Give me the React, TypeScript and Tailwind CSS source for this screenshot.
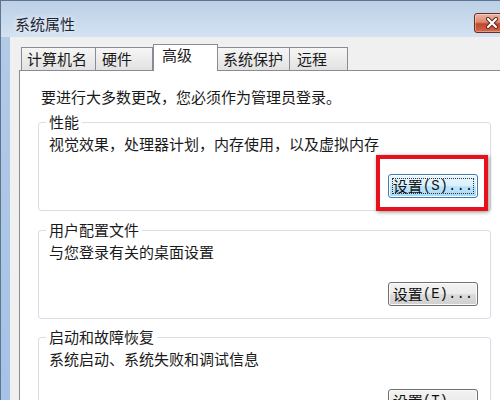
import React from 'react';

type Tab = { label: string; active?: boolean; cls: string };

const tabs: Tab[] = [
  { label: '计算机名', cls: 'ml-[2px] w-[75px] pl-[5px]' },
  { label: '硬件', cls: '-ml-px w-[58px] pl-[6px]' },
  { label: '高级', active: true, cls: 'w-[65px] pl-[8px]' },
  { label: '系统保护', cls: '-ml-px w-[73px] pl-[5px]' },
  { label: '远程', cls: '-ml-px w-[59px] pl-[7px]' },
];

const groups = [
  { title: '性能', text: '视觉效果，处理器计划，内存使用，以及虚拟内存', key: 'S', focused: true, mt: 'mt-[6px]' },
  { title: '用户配置文件', text: '与您登录有关的桌面设置', key: 'E', focused: false, mt: 'mt-[10px]' },
  { title: '启动和故障恢复', text: '系统启动、系统失败和调试信息', key: 'T', focused: false, mt: 'mt-[9px]' },
];

const SettingsButton: React.FC<{ hotkey: string; focused: boolean }> = ({ hotkey, focused }) => (
  <button
    className={
      focused
        ? 'relative flex h-[24px] w-[90px] items-center justify-center rounded-[3px] border border-[#3c7fb1] bg-[linear-gradient(#eaf6fd,#d9f0fc_50%,#bee6fd_50%,#a7d9f5)] text-[15px] leading-[18px] text-[#111] shadow-[inset_0_0_0_1px_#fff]'
        : 'relative flex h-[24px] w-[90px] items-center justify-center rounded-[3px] border border-[#707070] bg-[linear-gradient(#f2f2f2,#ebebeb_50%,#dddddd_50%,#cfcfcf)] text-[15px] leading-[18px] text-[#111] shadow-[inset_0_0_0_1px_#fbfbfb]'
    }
  >
    <span>设置</span>
    <span className="font-['Liberation_Mono',monospace] text-[14px]">({hotkey})...</span>
    {focused && <span className="absolute inset-[3px] border border-dotted border-[#333]" />}
  </button>
);

export default function App() {
  return (
    <div className="h-[400px] w-[500px] overflow-hidden bg-white font-['Noto_Sans_CJK_SC',sans-serif] text-[#1a1a1a]">
      <div className="flex h-[400px] w-[528px] flex-col border-l border-t border-[#5f7490] bg-[linear-gradient(#b4cbe7,#a6c2e5)]">
        {/* Title bar */}
        <div className="flex h-[36px] shrink-0 items-start justify-between bg-[linear-gradient(#bccfe6,#d4e2f2)] pl-[14px] pr-[18px]">
          <span className="mt-[14px] text-[15px] leading-[18px] text-[#1e2633] [text-shadow:0_0_6px_#ffffff]">系统属性</span>
          <div className="mt-[12px] flex h-[20px] w-[36px] items-center justify-center rounded-[3px] border border-[#6b2b1f] bg-[linear-gradient(#eeb3a2,#d98a72_45%,#c2452c_55%,#d2694c)] shadow-[inset_0_0_0_1px_rgba(255,255,255,0.35)]">
            <svg width="14" height="12" viewBox="0 0 14 12">
              <path d="M3 2 L11 10 M11 2 L3 10" stroke="#5a2418" strokeWidth="4" strokeLinecap="round" />
              <path d="M3 2 L11 10 M11 2 L3 10" stroke="#ffffff" strokeWidth="2.2" strokeLinecap="round" />
            </svg>
          </div>
        </div>

        {/* Frame + client */}
        <div className="flex flex-1 pl-[9px] pr-[10px]">
          <div className="flex flex-1 flex-col bg-[#f0f0f0] px-[9px] pt-[7px]">
            {/* Tabs */}
            <div className="flex items-end">
              {tabs.map((t) =>
                t.active ? (
                  <div
                    key={t.label}
                    className={`relative z-10 flex h-[27px] items-start border border-b-0 border-[#898c95] bg-white pt-[1px] text-[15px] leading-[18px] ${t.cls}`}
                  >
                    {t.label}
                  </div>
                ) : (
                  <div
                    key={t.label}
                    className={`mb-px flex h-[23px] items-center border border-b-0 border-[#898c95] bg-[linear-gradient(#f6f6f6,#e2e2e2)] text-[15px] leading-[18px] ${t.cls}`}
                  >
                    {t.label}
                  </div>
                )
              )}
            </div>

            {/* Panel */}
            <div className="-mt-px flex-1 border border-[#898c95] bg-white pl-[18px] pr-[17px] pt-[16px]">
              <p className="ml-[3px] text-[15px] leading-[20px]">要进行大多数更改，您必须作为管理员登录。</p>

              {groups.map((g) => (
                <fieldset
                  key={g.title}
                  className={`rounded-[3px] border border-[#d5dfe5] pb-[12px] pl-[10px] pr-[12px] ${g.mt}`}
                >
                  <legend className="-ml-[3px] px-[3px] text-[15px] leading-[18px]">{g.title}</legend>
                  <p className="mt-[3px] text-[15px] leading-[20px]">{g.text}</p>
                  <div className="mt-[20px] flex justify-end">
                    <div className="relative">
                      <SettingsButton hotkey={g.key} focused={g.focused} />
                      {g.focused && (
                        <div className="absolute -bottom-[13px] -left-[12px] -right-[10px] -top-[19px] border-[4px] border-[#e8101c] shadow-[1px_1px_4px_rgba(0,0,0,0.45)]" />
                      )}
                    </div>
                  </div>
                </fieldset>
              ))}
            </div>
          </div>
        </div>
      </div>
    </div>
  );
}
